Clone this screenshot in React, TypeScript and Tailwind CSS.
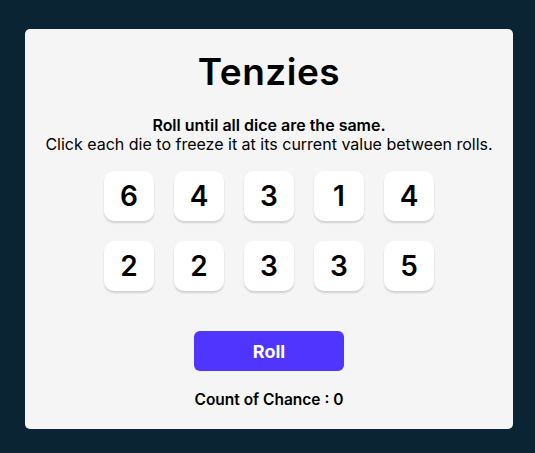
import React from "react";

const dice = [6, 4, 3, 1, 4, 2, 2, 3, 3, 5];

export default function App() {
  return (
    <div
      className="w-[535px] h-[453px] bg-[#0B2434] pt-[29px] pl-[25px]"
      style={{ fontFamily: "Inter, 'Noto Sans', sans-serif" }}
    >
      <main className="w-[488px] h-[400px] bg-[#F5F5F5] rounded-[5px] flex flex-col items-center">
        <h1 className="mt-[21px] text-[37px] leading-[44px] font-semibold text-black tracking-[0.5px]">
          Tenzies
        </h1>
        <p className="mt-[22px] text-[16px] leading-[19px] font-semibold text-black">
          Roll until all dice are the same.
        </p>
        <p className="text-[16px] leading-[19px] text-black">
          Click each die to freeze it at its current value between rolls.
        </p>
        <div className="mt-[17px] grid grid-cols-5 gap-[20px]">
          {dice.map((d, i) => (
            <div
              key={i}
              className="w-[50px] h-[50px] bg-white rounded-[10px] shadow-[0_2px_2px_rgba(0,0,0,0.15)] flex items-center justify-center text-[28px] font-semibold text-black"
            >
              {d}
            </div>
          ))}
        </div>
        <div className="mt-[40px] w-[150px] h-[40px] bg-[#5035FF] rounded-[6px] text-white text-[18px] font-bold flex items-center justify-center">
          Roll
        </div>
        <p className="mt-[20px] text-[15.5px] leading-[18px] font-semibold text-black">Count of Chance : 0</p>
      </main>
    </div>
  );
}
